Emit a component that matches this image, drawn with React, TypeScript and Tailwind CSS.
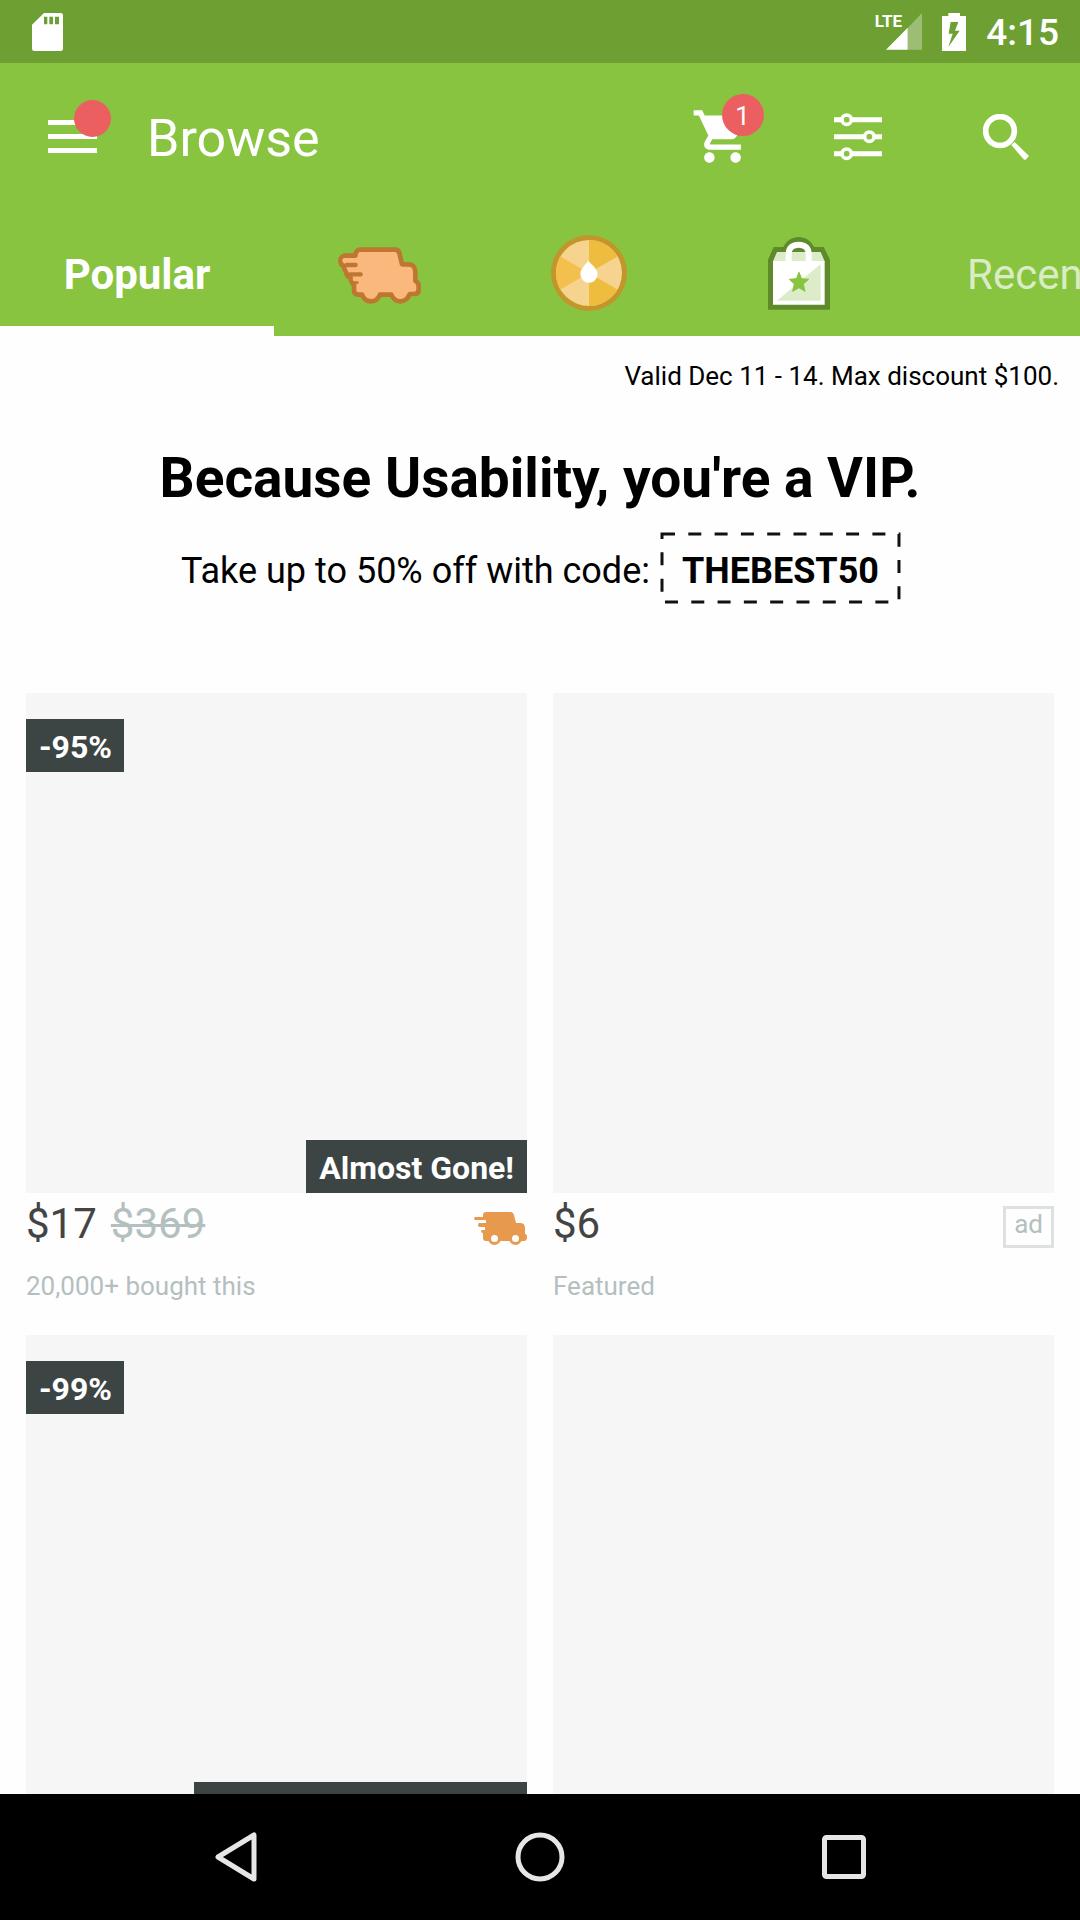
import React from "react";

function SdCardIcon() {
  return (
    <svg viewBox="96 38 93 114" className="h-[38px] w-[31px]" aria-hidden="true">
      <path
        fill="#fff"
        fillRule="evenodd"
        d="M132 38H182a7 7 0 0 1 7 7V145a7 7 0 0 1-7 7H103a7 7 0 0 1-7-7V73ZM132 49V72H142V49ZM148 49V72H159V49ZM165 49V72H177V49Z"
      />
    </svg>
  );
}

function SignalIcon() {
  return (
    <svg viewBox="676 38 108 111" className="h-[37px] w-9" aria-hidden="true">
      <path fill="#fff" fillOpacity="0.32" d="M741 83L784 38V148H741Z" />
      <path fill="#fff" d="M676 148L741 82V148Z" />
    </svg>
  );
}

function BatteryIcon() {
  return (
    <svg viewBox="849 36 72 114" className="h-[38px] w-6" aria-hidden="true">
      <path
        fill="#fff"
        fillRule="evenodd"
        d="M868 36H903V45H921V150H849V45H868ZM875 63L869 98H881L868 138L902 89H888L898 63Z"
      />
    </svg>
  );
}

function MenuIcon() {
  return (
    <svg viewBox="0 0 50 34" className="h-[34px] w-[50px]" aria-hidden="true">
      <path fill="#fff" d="M0 0H49V5H0ZM0 14H49V19H0ZM0 28H49V33H0Z" />
    </svg>
  );
}

function CartIcon() {
  return (
    <svg viewBox="0 0 24 24" className="size-[63px]" aria-hidden="true">
      <path
        fill="#fff"
        d="M7 18c-1.100 0-1.990.9-1.990 2S5.900 22 7 22s2-.9 2-2-.9-2-2-2zM1 2v2h2l3.600 7.590-1.350 2.450c-.16.280-.25.610-.25.960 0 1.100.9 2 2 2h12v-2H7.420c-.14 0-.25-.11-.25-.25l.03-.12.9-1.630h7.450c.75 0 1.410-.41 1.750-1.030l3.580-6.490A1.003 1.003 0 0 0 20 4H5.210l-.94-2H1zm16 16c-1.100 0-1.990.9-1.990 2s.89 2 1.990 2 2-.9 2-2-.9-2-2-2z"
      />
    </svg>
  );
}

function FilterIcon() {
  return (
    <svg viewBox="521 337 144 144" className="size-12" aria-hidden="true">
      <path stroke="#fff" strokeWidth="15" d="M521 357H665M521 408H665M521 459H665" />
      <g fill="#88c440" stroke="#fff" strokeWidth="11">
        <circle cx="559" cy="357" r="14" />
        <circle cx="627" cy="408" r="14" />
        <circle cx="559" cy="459" r="14" />
      </g>
    </svg>
  );
}

function SearchIcon() {
  return (
    <svg viewBox="969 339 138 138" className="size-[46px]" aria-hidden="true">
      <circle cx="1020" cy="390" r="43" fill="none" stroke="#fff" strokeWidth="17" />
      <path fill="#fff" d="M1054 432L1064 423L1107 465L1096 477L1091 475Z" />
    </svg>
  );
}

function ExpressTabIcon() {
  return (
    <svg viewBox="45 96 264 189" className="h-[63px] w-[88px]" aria-hidden="true">
      <path
        fill="#fbb87c"
        stroke="#be7631"
        strokeWidth="14"
        strokeLinejoin="round"
        d="M121 119H225C232 119 236 122 238 129L246 163H265C279 163 286 172 286 186V212C293 216 296 220 296 228V239C296 248 291 252 281 252H269C264 266 255 274 241 274C228 274 219 266 214 254H180C175 266 166 274 153 274C140 274 131 267 126 254H115C106 254 102 249 102 240V226C95 220 93 214 92 204C84 200 79 196 79 188C74 180 71 174 72 168C65 166 61 160 61 152C61 143 67 137 76 137H106C107 126 112 119 121 119Z"
      />
      <path stroke="#be7631" strokeWidth="13" strokeLinecap="round" d="M100 216H110" />
      <path stroke="#fbb87c" strokeWidth="12" strokeLinecap="round" d="M73 151H112M89 180H126M104 208H135" />
      <path stroke="#be7631" strokeWidth="13" strokeLinecap="round" d="M80 165H107M90 193H122" />
    </svg>
  );
}

function WheelTabIcon() {
  return (
    <svg viewBox="-114 -114 228 228" className="size-[76px]" aria-hidden="true">
      <circle r="114" fill="#c2962b" />
      <circle r="99" fill="#f6d48f" />
      <path fill="#eebd40" d="M0 0V-99A99 99 0 0 1 86 -49.500ZM0 0L86 49.500A99 99 0 0 1 0 99Z" />
      <path fill="#f4c04d" d="M0 0L-86 -49.500A99 99 0 0 0 -86 49.500Z" />
      <path fill="#fff" d="M-2 -36C5 -28 26 -12 26 3A26 26 0 0 1 -26 3C-26 -12 -9 -28 -2 -36Z" />
    </svg>
  );
}

function BagTabIcon() {
  return (
    <svg viewBox="145 79 186 219" className="h-[73px] w-[62px]" aria-hidden="true">
      <path fill="#5e8a2c" d="M145 147L162 109H191C200 90 218 79 237 79S274 90 283 109H312L331 147V297H145Z" />
      <path fill="#dcecc8" d="M172 124H303L315 152H160Z" />
      <path fill="#fff" d="M160 151H315V282H160Z" />
      <path fill="#dcecc8" d="M303 160V270H172Z" />
      <path fill="#5e8a2c" d="M217 124C217 115 226 110 237 110S257 115 257 124Z" />
      <path fill="none" stroke="#fff" strokeWidth="18" d="M207 154V130C207 112 219 102 237 102S267 112 267 130V154" />
      <path
        fill="#88c440"
        stroke="#88c440"
        strokeWidth="3"
        strokeLinejoin="round"
        d="M238 185L246 204L267 206L251 220L256 242L238 231L219 242L224 220L209 206L230 204Z"
      />
    </svg>
  );
}

function ExpressIcon() {
  return (
    <svg viewBox="0 0 54 36" className="h-9 w-[54px]" role="img" aria-label="Express shipping">
      <path
        fill="#e79a4e"
        d="M13 0H38Q40 0 41 3L43 11H47Q52 11 52 16V22Q54 22 54 25Q54 29 51 29H13Q10 29 10 26V21H9Q7 19 9 18H12V15H6Q4 13 6 11H13V8H2Q0 6.500 2 5H10V3Q10 0 13 0Z"
      />
      <circle cx="21.500" cy="26.500" r="5" fill="#fff" stroke="#e79a4e" strokeWidth="3" />
      <circle cx="42.500" cy="26.500" r="5" fill="#fff" stroke="#e79a4e" strokeWidth="3" />
    </svg>
  );
}

function StatusBar() {
  return (
    <div className="flex h-[63px] shrink-0 items-center justify-between bg-[#6d9f33] pr-[21px] pl-8">
      <SdCardIcon />
      <div className="flex items-center gap-5">
        <div className="relative">
          <SignalIcon />
          <span className="absolute top-0 right-5 font-['Liberation_Sans_Narrow','Roboto',sans-serif] text-[17px] leading-4 font-bold text-white">
            LTE
          </span>
        </div>
        <BatteryIcon />
        <span className="pt-0.5 text-[37px] leading-[42px] font-medium text-white">4:15</span>
      </div>
    </div>
  );
}

function Toolbar() {
  return (
    <div className="flex h-[147px] items-center pl-12">
      <button type="button" aria-label="Menu" className="relative">
        <MenuIcon />
        <span className="absolute -top-5 left-[26px] size-[37px] rounded-full bg-[#eb5f61]" />
      </button>
      <h1 className="ml-[49px] flex-1 pt-1 text-[52px] leading-[60px] text-white">Browse</h1>
      <button type="button" aria-label="Cart" className="flex w-[124px] justify-center">
        <span className="relative">
          <CartIcon />
          <span className="absolute -top-[11px] left-[31px] flex size-[42px] items-center justify-center rounded-full bg-[#eb5f61] pt-0.5 text-[26px] leading-[30px] text-white">
            1
          </span>
        </span>
      </button>
      <button type="button" aria-label="Filter" className="flex w-[148px] justify-center">
        <FilterIcon />
      </button>
      <button type="button" aria-label="Search" className="flex w-[148px] justify-center">
        <SearchIcon />
      </button>
    </div>
  );
}

const iconTabs = [
  { label: "Express", Icon: ExpressTabIcon },
  { label: "Wheel", Icon: WheelTabIcon },
  { label: "Shop", Icon: BagTabIcon },
];

function Tabs() {
  return (
    <nav className="flex h-[126px] overflow-hidden" aria-label="Feeds">
      <button
        type="button"
        className="relative w-[274px] shrink-0 pt-1 text-[42px] leading-[48px] font-bold text-white"
      >
        Popular
        <span className="absolute inset-x-0 bottom-0 h-[10px] bg-[#fefefe]" />
      </button>
      {iconTabs.map(({ label, Icon }) => (
        <button
          key={label}
          type="button"
          aria-label={label}
          className="flex w-[210px] shrink-0 items-center justify-center"
        >
          <Icon />
        </button>
      ))}
      <button type="button" className="shrink-0 px-[63px] pt-1 text-[42px] leading-[48px] text-white/70">
        Recent
      </button>
    </nav>
  );
}

function Promo() {
  return (
    <section className="pt-[25px] text-black">
      <p className="pr-[21px] text-right text-[26px] leading-[30px]">Valid Dec 11 - 14. Max discount $100.</p>
      <h2 className="mt-[55px] text-center text-[55px] leading-[64px] font-bold">
        Because Usability, you're a VIP.
      </h2>
      <div className="mt-6 flex items-center justify-center gap-3 text-[36px] leading-[42px]">
        <span className="pt-1.5">Take up to 50% off with code:</span>
        <span className="relative flex h-[68px] items-center px-5 pt-1.5 font-bold">
          THEBEST50
          <svg className="absolute inset-0 size-full overflow-visible" aria-hidden="true">
            <rect
              width="100%"
              height="100%"
              fill="none"
              stroke="#111"
              strokeWidth="3"
              strokeDasharray="13 13.300"
            />
          </svg>
        </span>
      </div>
    </section>
  );
}

type Product = {
  price?: string;
  oldPrice?: string;
  note?: string;
  discount?: string;
  label?: React.ReactNode;
  express?: boolean;
  ad?: boolean;
};

const products: Product[] = [
  {
    price: "$17",
    oldPrice: "$369",
    note: "20,000+ bought this",
    discount: "-95%",
    label: "Almost Gone!",
    express: true,
  },
  { price: "$6", note: "Featured", ad: true },
  { discount: "-99%", label: <span className="block w-[307px]" /> },
  {},
];

function Card({ product }: { product: Product }) {
  const { price, oldPrice, note, discount, label, express, ad } = product;
  return (
    <article>
      <div className="relative aspect-[501/500] bg-[#f6f6f6]">
        {discount && (
          <span className="absolute top-[26px] left-0 flex h-[53px] items-center bg-[#3d4544] pr-3 pl-[13px] pt-0.5 text-[32px] leading-[38px] font-bold text-white">
            {discount}
          </span>
        )}
        {label && (
          <span className="absolute right-0 bottom-0 flex h-[53px] items-center bg-[#3d4544] px-[13px] pt-0.5 text-[32px] leading-[38px] font-bold text-white">
            {label}
          </span>
        )}
      </div>
      {price && (
        <>
          <div className="mt-[7px] flex items-end justify-between">
            <p className="flex gap-[14px] text-[42px] leading-[48px] text-[#444]">
              {price}
              {oldPrice && <s className="text-[#b4c0bf] decoration-[3px]">{oldPrice}</s>}
            </p>
            {express && <ExpressIcon />}
            {ad && (
              <span className="border-[3px] border-[#dde2e1] px-2 pb-1.5 text-[26px] leading-[30px] text-[#b4c0bf]">
                ad
              </span>
            )}
          </div>
          <p className="mt-[23px] text-[26px] leading-[30px] text-[#b4c0bf]">{note}</p>
        </>
      )}
    </article>
  );
}

function SystemNav() {
  return (
    <div className="flex h-[126px] shrink-0 items-center bg-black px-[84px]">
      <button type="button" aria-label="Back" className="flex flex-1 justify-center">
        <svg viewBox="0 0 44 52" className="h-[52px] w-11" aria-hidden="true">
          <path fill="none" stroke="#e6e6e6" strokeWidth="5" strokeLinejoin="round" d="M40 4V48L4 26Z" />
        </svg>
      </button>
      <button type="button" aria-label="Home" className="flex flex-1 justify-center">
        <svg viewBox="0 0 50 50" className="size-[50px]" aria-hidden="true">
          <circle cx="25" cy="25" r="22" fill="none" stroke="#e6e6e6" strokeWidth="5" />
        </svg>
      </button>
      <button type="button" aria-label="Overview" className="flex flex-1 justify-center">
        <svg viewBox="0 0 44 44" className="size-11" aria-hidden="true">
          <rect x="2.500" y="2.500" width="39" height="39" rx="2" fill="none" stroke="#e6e6e6" strokeWidth="5" />
        </svg>
      </button>
    </div>
  );
}

export default function App() {
  return (
    <div className="flex h-screen flex-col bg-[#fefefe] font-['Roboto',sans-serif]">
      <StatusBar />
      <header className="shrink-0 bg-[#88c440]">
        <Toolbar />
        <Tabs />
      </header>
      <main className="min-h-0 flex-1 overflow-hidden">
        <Promo />
        <div className="mt-[91px] grid grid-cols-2 gap-x-[26px] gap-y-[34px] px-[26px]">
          {products.map((product, index) => (
            <Card key={index} product={product} />
          ))}
        </div>
      </main>
      <SystemNav />
    </div>
  );
}
